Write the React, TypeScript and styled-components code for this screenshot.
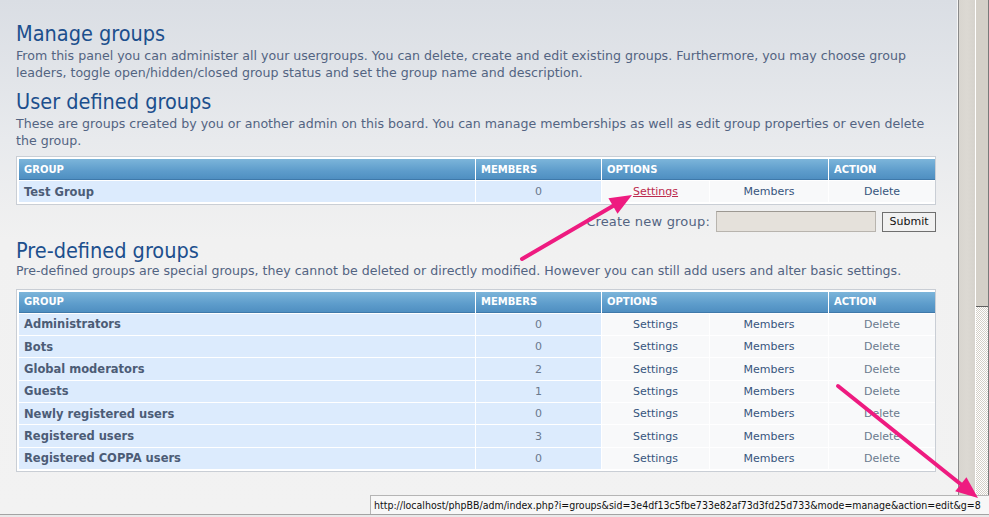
import React from "react";
import styled, { createGlobalStyle } from "styled-components";

const GlobalStyle = createGlobalStyle`
  html, body { margin: 0; padding: 0; }
  body {
    width: 989px;
    height: 517px;
    overflow: hidden;
    background: #e4e4e4;
    font-family: "DejaVu Sans", Verdana, sans-serif;
  }
  * { box-sizing: border-box; }
`;

const Window = styled.div`
  position: relative;
  width: 989px;
  height: 517px;
  display: flex;
  flex-direction: column;
`;

const Viewport = styled.div`
  display: flex;
  height: 514px;
`;

const Main = styled.main`
  width: 958px;
  height: 514px;
  border-right: 1px solid #f6f6f6;
  background: linear-gradient(#dadee4 0px, #e8eaed 140px, #f1f1f1 240px, #f2f2f2 100%);
  padding: 0 21px 0 16px;
  display: flex;
  flex-direction: column;
`;

const Heading = styled.h1<{ $gap: number }>`
  margin: ${(p) => p.$gap}px 0 0;
  font-family: "DejaVu Sans Condensed", "DejaVu Sans", sans-serif;
  font-weight: normal;
  font-size: 21.5px;
  line-height: 25px;
  color: #1c4f8d;
`;

const Intro = styled.p<{ $gap: number }>`
  margin: ${(p) => p.$gap}px 0 0;
  font-size: 12.6px;
  line-height: 16.5px;
  color: #536482;
`;

const TableBox = styled.div<{ $gap: number }>`
  margin-top: ${(p) => p.$gap}px;
  width: 920px;
  border: 1px solid #c9ced5;
  background: #ffffff;
  padding: 2px 1px 2px 2px;
  display: flex;
  flex-direction: column;
  gap: 1px;
`;

const GridRow = styled.div`
  display: grid;
  grid-template-columns: 456px 125px 107px 118px 106px;
  column-gap: 1px;
`;

const HeadCell = styled.div<{ $span?: number }>`
  grid-column: span ${(p) => p.$span ?? 1};
  height: 21px;
  padding: 0 5px;
  display: flex;
  align-items: center;
  background: linear-gradient(#7cb5da, #5d9ccb 60%, #4f8fc1);
  border-bottom: 1px solid #3f79aa;
  color: #ffffff;
  font-size: 10px;
  font-weight: bold;
  text-transform: uppercase;
`;

const Cell = styled.div<{ $kind: "name" | "count" | "opt" }>`
  height: 21.33px;
  display: flex;
  align-items: center;
  justify-content: ${(p) => (p.$kind === "name" ? "flex-start" : "center")};
  padding: 0 5px;
  font-size: ${(p) => (p.$kind === "name" ? "11.5px" : "11px")};
  background: ${(p) => (p.$kind === "opt" ? "#f8f9fa" : "#dcebfd")};
  color: ${(p) => (p.$kind === "name" ? "#4c5c76" : "#6a798d")};
  font-weight: ${(p) => (p.$kind === "name" ? "bold" : "normal")};
`;

const OptLink = styled.a<{ $state?: "hover" | "muted" }>`
  color: ${(p) => (p.$state === "hover" ? "#bc2a4d" : p.$state === "muted" ? "#6a7a8e" : "#36557d")};
  text-decoration: ${(p) => (p.$state === "hover" ? "underline" : "none")};
  cursor: pointer;
`;

const CreateRow = styled.form`
  margin-top: 6px;
  width: 920px;
  display: flex;
  justify-content: flex-end;
  align-items: center;
  gap: 6px;
  height: 21px;
`;

const CreateLabel = styled.label`
  font-size: 13px;
  letter-spacing: 0.2px;
  color: #536482;
`;

const TextInput = styled.input`
  width: 160px;
  height: 21px;
  border: 1px solid #b8b4ae;
  border-top-color: #9c9892;
  background: #e5e1db;
  padding: 0 3px;
`;

const SubmitButton = styled.button`
  width: 54px;
  height: 20px;
  padding: 0;
  border: 1px solid #6f6f6f;
  background: #f1f1f1;
  font-family: "DejaVu Sans", sans-serif;
  font-size: 11px;
  color: #111;
`;

const Side = styled.div`
  flex: 1;
  display: flex;
  border-left: 1px solid #8a8a8a;
`;

const Gutter = styled.div`
  width: 17px;
  background: linear-gradient(90deg, #d8d5cf, #dcd9d3 50%, #d6d3cd);
  border-right: 1px solid #ffffff;
`;

const ScrollBar = styled.div`
  flex: 1;
  display: flex;
  flex-direction: column;
  border-right: 1px solid #7a7a7a;
`;

const Thumb = styled.div`
  height: 307px;
  background: #d4d0c8;
  border-bottom: 1px solid #5f5f5f;
`;

const Track = styled.div`
  flex: 1;
  background-color: #ffffff;
  background-image: conic-gradient(#d4d0c8 25%, #ffffff 0 50%, #d4d0c8 0 75%, #ffffff 0);
  background-size: 2px 2px;
`;

const BottomEdge = styled.div`
  height: 3px;
  border-top: 1px solid #a3a3a3;
  background: #e9e9e9;
`;

const StatusTip = styled.div`
  position: absolute;
  left: 370px;
  top: 495px;
  right: 0;
  height: 19px;
  border: 1px solid #b5b5b5;
  border-right: none;
  border-bottom: none;
  background: #f7f7f7;
  padding-left: 3px;
  display: flex;
  align-items: center;
  font-family: "DejaVu Sans Condensed", "DejaVu Sans", sans-serif;
  font-size: 10.5px;
  color: #111;
  white-space: nowrap;
  overflow: hidden;
`;

const ArrowLayer = styled.svg`
  position: absolute;
  left: 0;
  top: 0;
  pointer-events: none;
`;

type Group = { name: string; members: number };

const predefined: Group[] = [
  { name: "Administrators", members: 0 },
  { name: "Bots", members: 0 },
  { name: "Global moderators", members: 2 },
  { name: "Guests", members: 1 },
  { name: "Newly registered users", members: 0 },
  { name: "Registered users", members: 3 },
  { name: "Registered COPPA users", members: 0 },
];

const HeaderRow = () => (
  <GridRow>
    <HeadCell>Group</HeadCell>
    <HeadCell>Members</HeadCell>
    <HeadCell $span={2}>Options</HeadCell>
    <HeadCell>Action</HeadCell>
  </GridRow>
);

function arrowHead(x1: number, y1: number, x2: number, y2: number, len: number, half: number) {
  const dx = x2 - x1;
  const dy = y2 - y1;
  const l = Math.hypot(dx, dy);
  const ux = dx / l;
  const uy = dy / l;
  const bx = x2 - ux * len;
  const by = y2 - uy * len;
  const px = -uy * half;
  const py = ux * half;
  return {
    base: { x: bx, y: by },
    points: `${x2},${y2} ${bx + px},${by + py} ${bx - px},${by - py}`,
  };
}

const Arrow = ({ x1, y1, x2, y2 }: { x1: number; y1: number; x2: number; y2: number }) => {
  const h = arrowHead(x1, y1, x2, y2, 22, 9);
  return (
    <g>
      <line x1={x1} y1={y1} x2={h.base.x} y2={h.base.y} stroke="#ee1b80" strokeWidth={4} strokeLinecap="round" />
      <polygon points={h.points} fill="#ee1b80" />
    </g>
  );
};

export default function App() {
  return (
    <Window>
      <GlobalStyle />
      <Viewport>
        <Main>
          <Heading $gap={21}>Manage groups</Heading>
          <Intro $gap={2}>
            From this panel you can administer all your usergroups. You can delete, create and edit existing groups. Furthermore, you may choose group leaders, toggle open/hidden/closed group status and set the group name and description.
          </Intro>
          <Heading $gap={8}>User defined groups</Heading>
          <Intro $gap={2}>
            These are groups created by you or another admin on this board. You can manage memberships as well as edit group properties or even delete the group.
          </Intro>
          <TableBox $gap={7}>
            <HeaderRow />
            <GridRow>
              <Cell $kind="name">Test Group</Cell>
              <Cell $kind="count">0</Cell>
              <Cell $kind="opt">
                <OptLink $state="hover">Settings</OptLink>
              </Cell>
              <Cell $kind="opt">
                <OptLink>Members</OptLink>
              </Cell>
              <Cell $kind="opt">
                <OptLink>Delete</OptLink>
              </Cell>
            </GridRow>
          </TableBox>
          <CreateRow onSubmit={(e) => e.preventDefault()}>
            <CreateLabel htmlFor="group_name">Create new group:</CreateLabel>
            <TextInput id="group_name" type="text" />
            <SubmitButton type="submit">Submit</SubmitButton>
          </CreateRow>
          <Heading $gap={6}>Pre-defined groups</Heading>
          <Intro $gap={0}>
            Pre-defined groups are special groups, they cannot be deleted or directly modified. However you can still add users and alter basic settings.
          </Intro>
          <TableBox $gap={9}>
            <HeaderRow />
            {predefined.map((g) => (
              <GridRow key={g.name}>
                <Cell $kind="name">{g.name}</Cell>
                <Cell $kind="count">{g.members}</Cell>
                <Cell $kind="opt">
                  <OptLink>Settings</OptLink>
                </Cell>
                <Cell $kind="opt">
                  <OptLink>Members</OptLink>
                </Cell>
                <Cell $kind="opt">
                  <OptLink $state="muted">Delete</OptLink>
                </Cell>
              </GridRow>
            ))}
          </TableBox>
        </Main>
        <Side>
          <Gutter />
          <ScrollBar>
            <Thumb />
            <Track />
          </ScrollBar>
        </Side>
      </Viewport>
      <BottomEdge />
      <StatusTip>
        http://localhost/phpBB/adm/index.php?i=groups&amp;sid=3e4df13c5fbe733e82af73d3fd25d733&amp;mode=manage&amp;action=edit&amp;g=8
      </StatusTip>
      <ArrowLayer width={989} height={517} viewBox="0 0 989 517">
        <Arrow x1={522} y1={259} x2={632} y2={195} />
        <Arrow x1={838} y1={386} x2={978} y2={498} />
      </ArrowLayer>
    </Window>
  );
}
